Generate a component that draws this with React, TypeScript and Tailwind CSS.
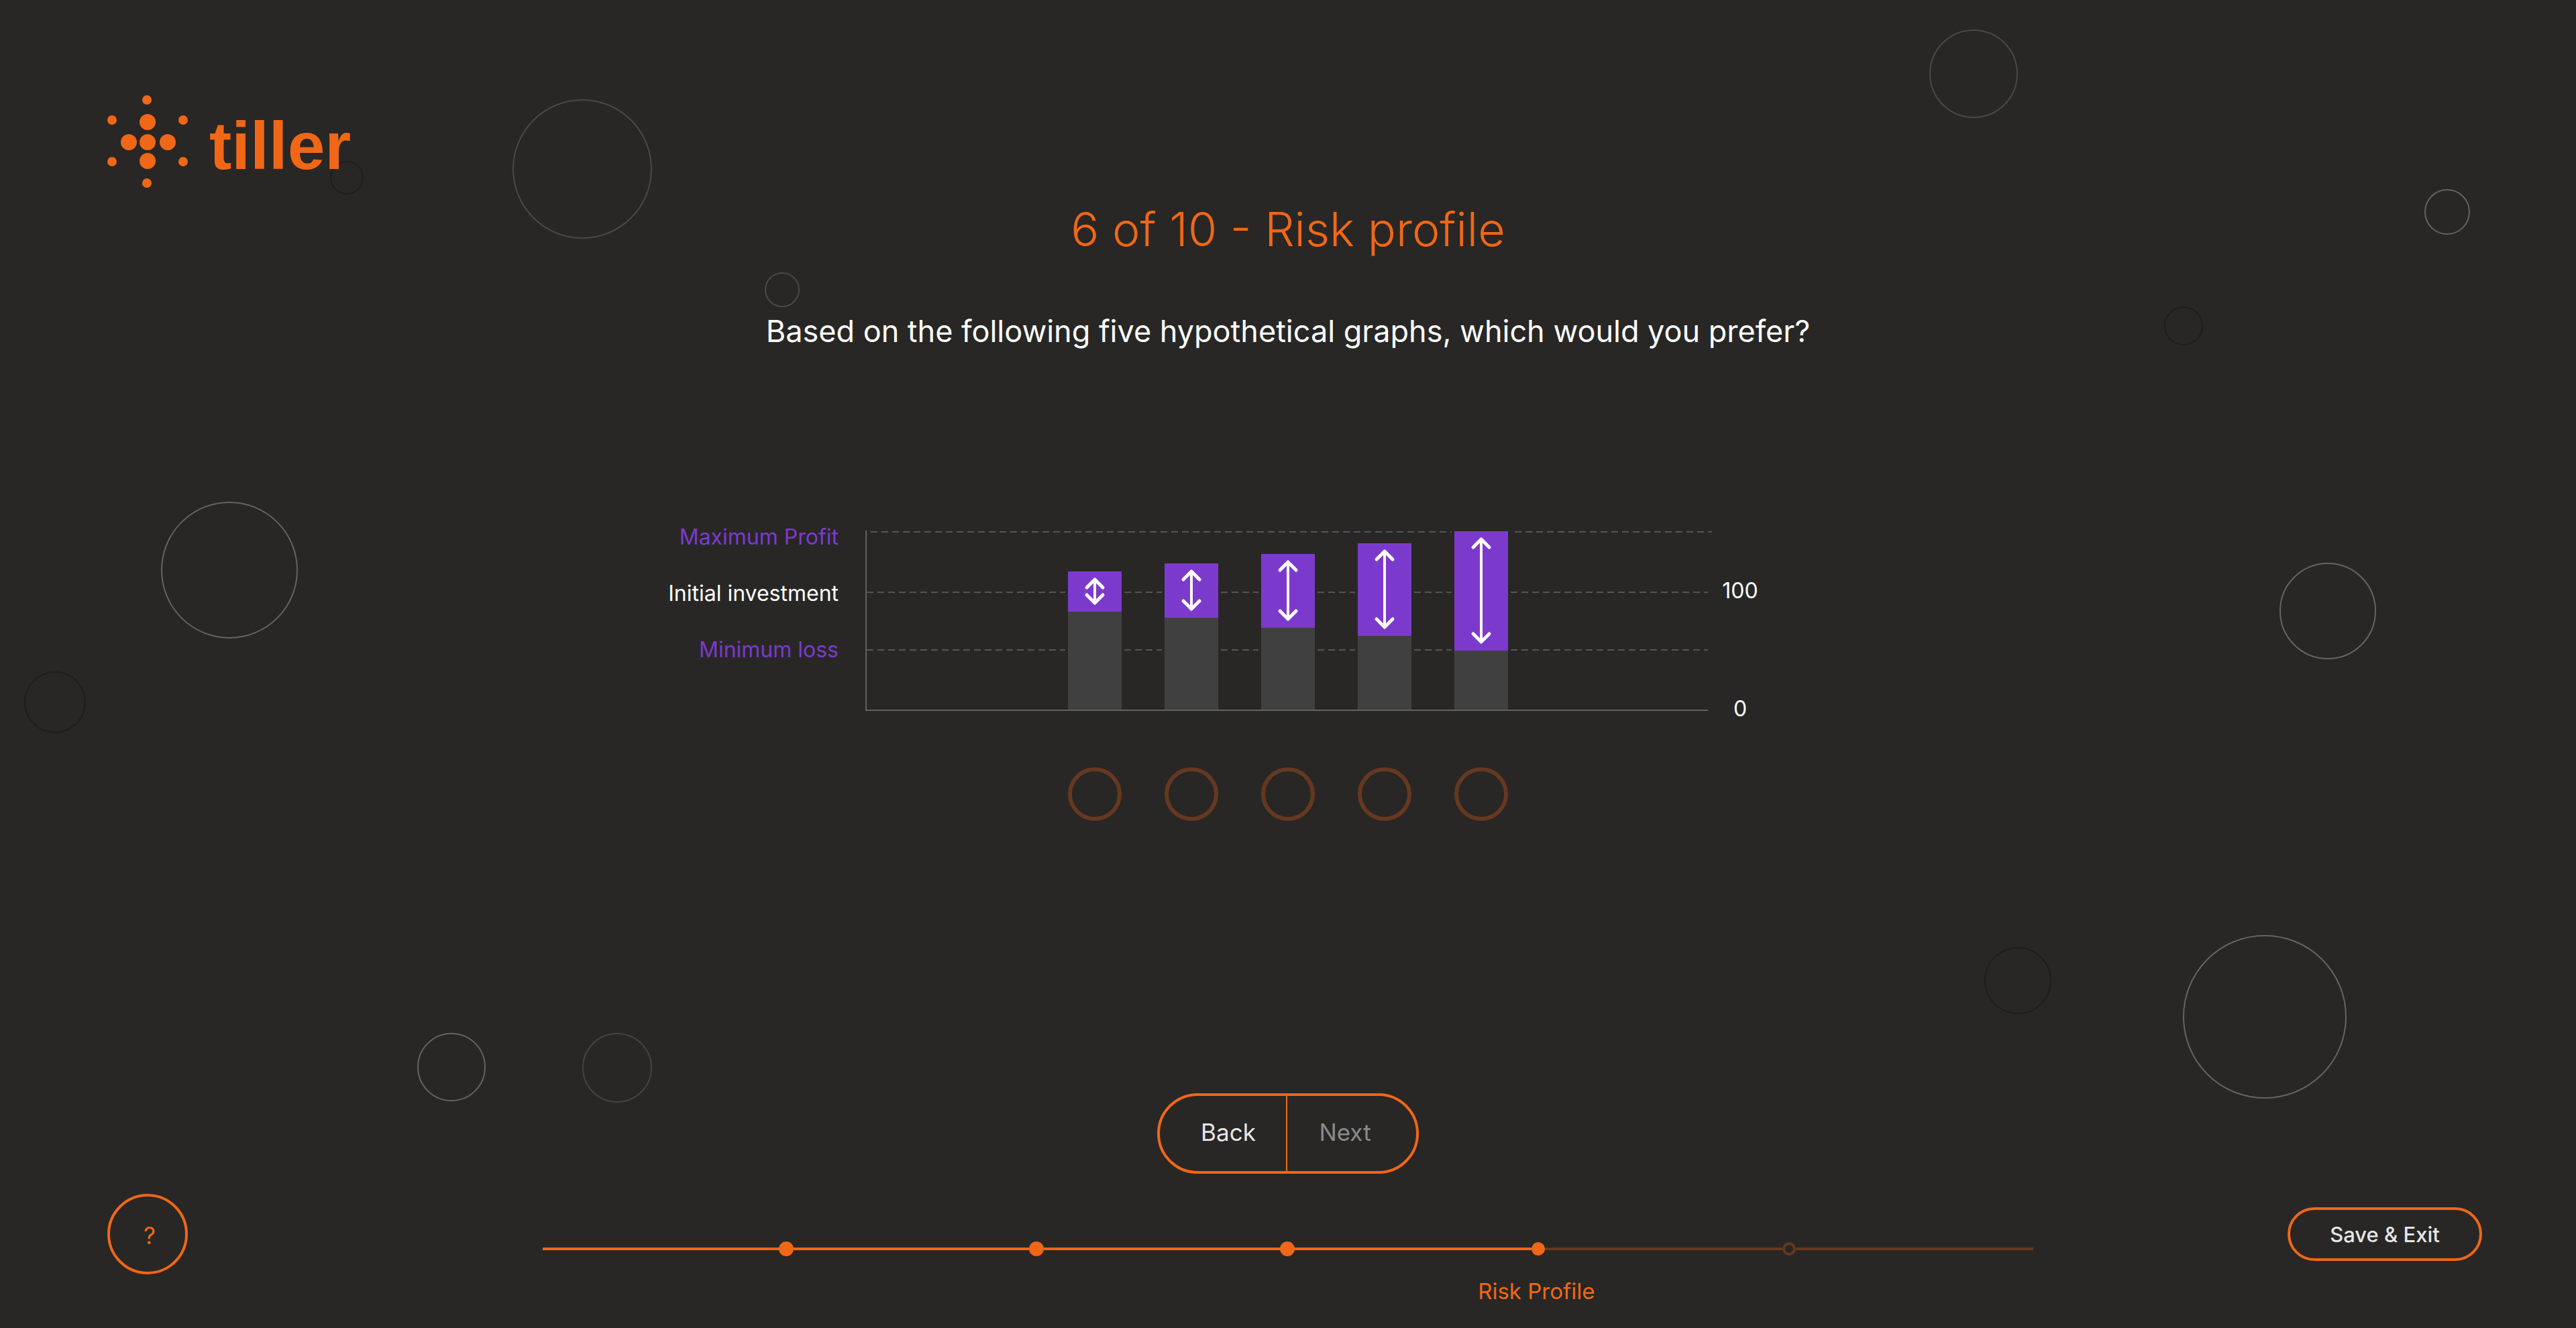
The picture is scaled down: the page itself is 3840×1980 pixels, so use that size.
const orbs = [
  "left-[764px] top-[148px] size-[208px] border-[#484846]",
  "left-[1140px] top-[406px] size-[52px] border-[#484846]",
  "left-[492px] top-[240px] size-[50px] border-[#1f1e1d]",
  "left-[240px] top-[748px] size-[204px] border-[#646462]",
  "left-[36px] top-[1001px] size-[92px] border-[#1f1e1d]",
  "left-[622px] top-[1540px] size-[102px] border-[#646462]",
  "left-[868px] top-[1540px] size-[104px] border-[#444442]",
  "right-[832px] top-[44px] size-[132px] border-[#484846]",
  "right-[158px] top-[282px] size-[68px] border-[#646462]",
  "right-[556px] top-[457px] size-[58px] border-[#1f1e1d]",
  "right-[298px] top-[839px] size-[144px] border-[#646462]",
  "right-[782px] top-[1412px] size-[100px] border-[#1f1e1d]",
  "right-[342px] top-[1394px] size-[244px] border-[#646462]",
];

const graphs = [
  { gain: 60, base: 146 },
  { gain: 81, base: 137 },
  { gain: 110, base: 122 },
  { gain: 138, base: 110 },
  { gain: 178, base: 88 },
];

function LogoMark() {
  const small = [[59, 7], [7, 37], [113, 37], [7, 99], [113, 99], [59, 131]];
  const large = [[60, 40], [32, 70], [60, 70], [90, 70], [60, 98]];
  return (
    <svg className="h-[138px] w-[120px]" viewBox="0 0 120 138" fill="#f06717" aria-hidden="true">
      {small.map(([x, y]) => <circle key={`${x}-${y}`} cx={x} cy={y} r="7" />)}
      {large.map(([x, y]) => <circle key={`${x}-${y}`} cx={x} cy={y} r="12" />)}
    </svg>
  );
}

function RangeArrow({ height }: { height: number }) {
  const b = height - 13;
  return (
    <svg className="w-20" height={height} viewBox={`0 0 80 ${height}`} fill="none" stroke="#fff" strokeLinecap="round" strokeLinejoin="round" aria-hidden="true">
      <path strokeWidth="4" d={`M40 12V${b}`} />
      <path strokeWidth="5" d={`M28 24L40 12L52 24M28 ${b - 12}L40 ${b}L52 ${b - 12}`} />
    </svg>
  );
}

function Chart() {
  const dash = "absolute h-[2px] bg-[repeating-linear-gradient(to_right,#555553_0_10px,transparent_10px_16px)]";
  return (
    <fieldset aria-label="Preferred graph" className="mx-auto grid w-fit grid-cols-[296px_1256px_300px] text-[32px] leading-9">
      <div className="flex flex-col gap-12 pr-10 text-right whitespace-nowrap">
        <span className="text-[#7c3acd]">Maximum Profit</span>
        <span>Initial investment</span>
        <span className="text-[#7c3acd]">Minimum loss</span>
      </div>
      <div className="pt-2">
        <div className="relative flex h-[269px] items-end justify-center gap-14 border-b-2 border-l-2 border-[#60605e] pl-[2px]">
          <span className={`${dash} top-px left-[6px] -right-[6px]`} />
          <span className={`${dash} inset-x-0 top-[91px]`} />
          <span className={`${dash} inset-x-0 top-[177px]`} />
          {graphs.map(({ gain, base }, i) => (
            <div key={i} className="relative bg-[#282725] px-1">
              <div className="flex w-20 flex-col">
                <div className="bg-[#7c3acd]" style={{ height: gain }}><RangeArrow height={gain} /></div>
                <div className="bg-[#404040]" style={{ height: base }} />
              </div>
            </div>
          ))}
        </div>
        <div className="flex justify-center gap-16 pt-[84px] pl-1">
          {graphs.map((_, i) => (
            <input key={i} type="radio" name="graph" aria-label={`Graph ${i + 1}`} className="size-20 appearance-none rounded-full border-[6px] border-[#663820] checked:bg-[#f06717]" />
          ))}
        </div>
      </div>
      <div className="flex flex-col gap-[140px] pt-20 pl-4">
        <span className="w-16 text-center">100</span>
        <span className="w-16 text-center">0</span>
      </div>
    </fieldset>
  );
}

function Progress() {
  const line = "h-1 flex-1";
  return (
    <div className="mx-auto w-[2222px] max-w-full">
      <div className="flex items-center">
        {[0, 1, 2].map((i) => (
          <div key={i} className="flex flex-1 items-center">
            <span className={`${line} bg-[#f06717]`} />
            <span className="size-[22px] rounded-full bg-[#f06717]" />
          </div>
        ))}
        <div className="flex flex-1 items-center">
          <span className={`${line} bg-[#f06717]`} />
          <span className="size-5 rounded-full bg-[#f06717]" />
        </div>
        <div className="flex flex-1 items-center">
          <span className={`${line} bg-[#663820]`} />
          <span className="size-5 rounded-full border-4 border-[#663820]" />
        </div>
        <span className="h-1 w-[354px] bg-[#663820]" />
      </div>
      <div className="grid grid-cols-6 pt-[34px] text-[33px] leading-9 text-[#f06717]">
        <span className="col-span-2 col-start-4 text-center">Risk Profile</span>
      </div>
    </div>
  );
}

export default function App() {
  return (
    <div className="relative flex min-h-screen flex-col overflow-hidden bg-[#282725] font-['Inter',sans-serif] font-normal text-white">
      {orbs.map((orb) => <span key={orb} className={`pointer-events-none absolute rounded-full border-2 ${orb}`} />)}
      <header className="relative px-40 pt-[142px]">
        <a href="#" className="flex h-[138px] w-fit items-center gap-8">
          <LogoMark />
          <span className="pt-3 font-['Liberation_Sans',sans-serif] text-[100px] leading-none font-bold text-[#f06717]">tiller</span>
        </a>
      </header>
      <main className="relative flex flex-1 flex-col">
        <h1 className="pt-[22px] text-center text-[70px] leading-20 font-light text-[#f06717]">6 of 10 - Risk profile</h1>
        <h2 className="pt-[82px] pb-[259px] text-center text-[45px] leading-[60px]">Based on the following five hypothetical graphs, which would you prefer?</h2>
        <Chart />
        <div className="mx-auto mt-auto flex h-[120px] w-[390px] rounded-full border-4 border-[#f06717] text-[35px]">
          <button type="button" className="flex-1 pb-1 pl-4 text-[#e6e6e6]">Back</button>
          <button type="button" disabled className="flex-1 border-l-2 border-[#f06717] pr-5 pb-1 text-[#8a8a8a]">Next</button>
        </div>
      </main>
      <footer className="relative flex h-[230px] items-start justify-between px-40 pt-[30px] pr-[140px]">
        <button type="button" aria-label="Help" className="size-[120px] shrink-0 rounded-full border-4 border-[#f06717] pt-1 pl-1.5 text-[35px] text-[#f06717]">?</button>
        <div className="min-w-0 flex-1 pt-[71px] pl-[150px]"><Progress /></div>
        <button type="button" className="mt-5 h-20 w-[290px] shrink-0 rounded-full border-4 border-[#f06717] pt-[2px] text-[31px] font-medium text-[#e6e6e6]">Save &amp; Exit</button>
      </footer>
    </div>
  );
}
